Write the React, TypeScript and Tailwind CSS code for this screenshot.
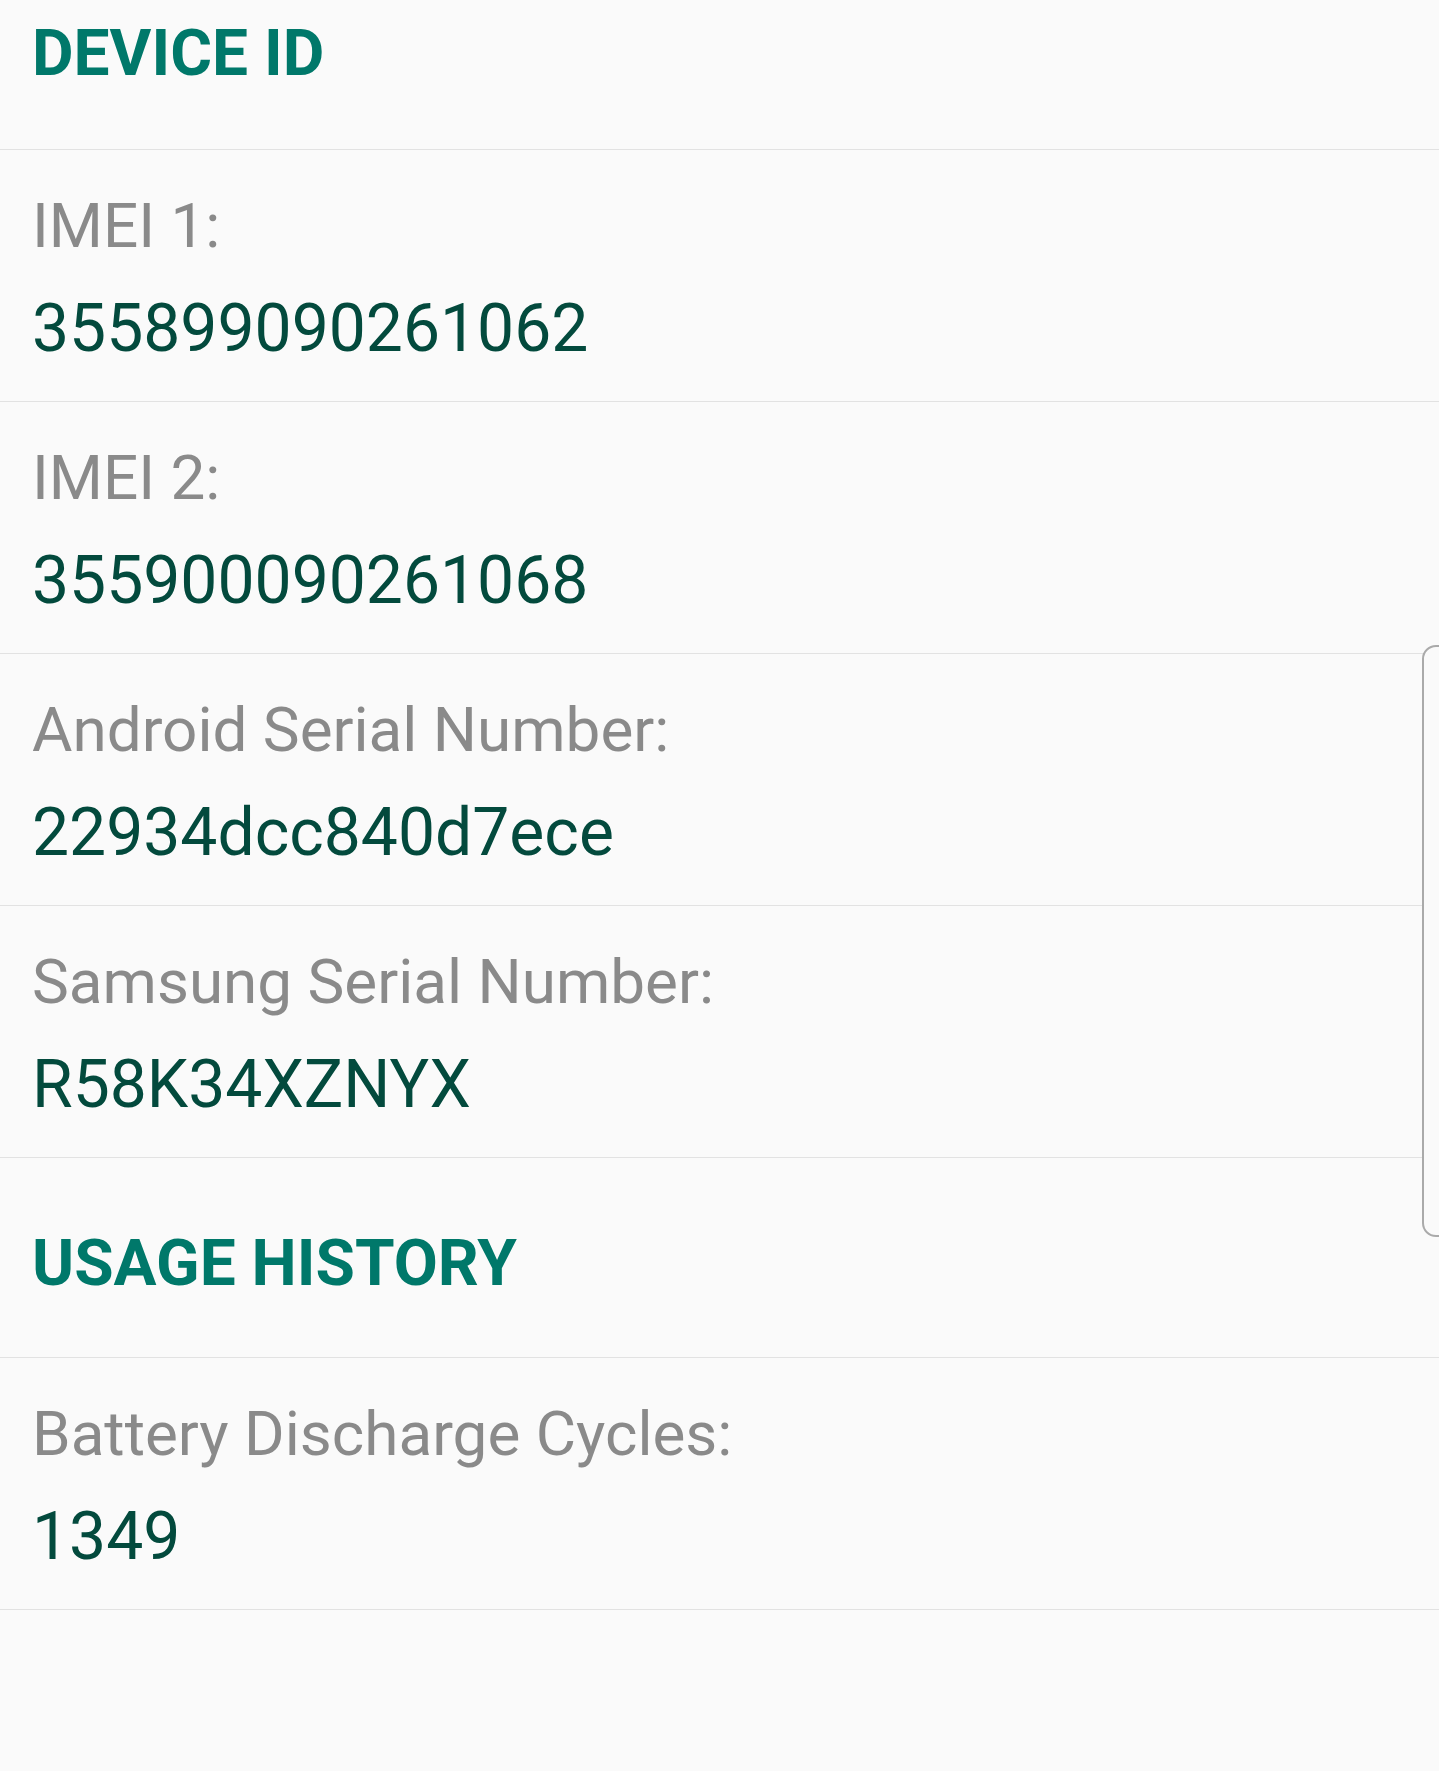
const rows = [
  { label: "IMEI 1:", value: "355899090261062" },
  { label: "IMEI 2:", value: "355900090261068" },
  { label: "Android Serial Number:", value: "22934dcc840d7ece" },
  { label: "Samsung Serial Number:", value: "R58K34XZNYX" },
];

function Header({ title, first }: { title: string; first?: boolean }) {
  return (
    <div
      className={
        first
          ? "border-b border-[#e2e2e2] pl-[32px] pt-[22px] pb-[63px]"
          : "border-b border-[#e2e2e2] pl-[32px] pt-[74px] pb-[61px]"
      }
    >
      <span className="block whitespace-nowrap text-[64px] font-bold leading-none text-[#00786a]">
        {title}
      </span>
    </div>
  );
}

function InfoRow({ label, value }: { label: string; value: string }) {
  return (
    <div className="flex flex-col border-b border-[#e2e2e2] pl-[32px] pt-[44px] pb-[39px]">
      <span className="block whitespace-nowrap text-[62px] leading-[63px] text-[#8a8a8a]">
        {label}
      </span>
      <span className="mt-[39px] block whitespace-nowrap text-[66px] leading-none text-[#034a3d]">
        {value}
      </span>
    </div>
  );
}

export default function App() {
  return (
    <div
      className="relative h-[1771px] w-[1439px] overflow-hidden bg-[#fafafa]"
      style={{ fontFamily: "Roboto, 'Noto Sans', sans-serif" }}
    >
      <Header title="DEVICE ID" first />
      {rows.map((r) => (
        <InfoRow key={r.label} label={r.label} value={r.value} />
      ))}
      <Header title="USAGE HISTORY" />
      <InfoRow label="Battery Discharge Cycles:" value="1349" />

      {/* fast scroll thumb */}
      <div className="absolute left-[1422px] top-[645px] h-[592px] w-[40px] rounded-l-[14px] border-[2px] border-[#aaaaaa] bg-[#fafafa]" />
    </div>
  );
}
